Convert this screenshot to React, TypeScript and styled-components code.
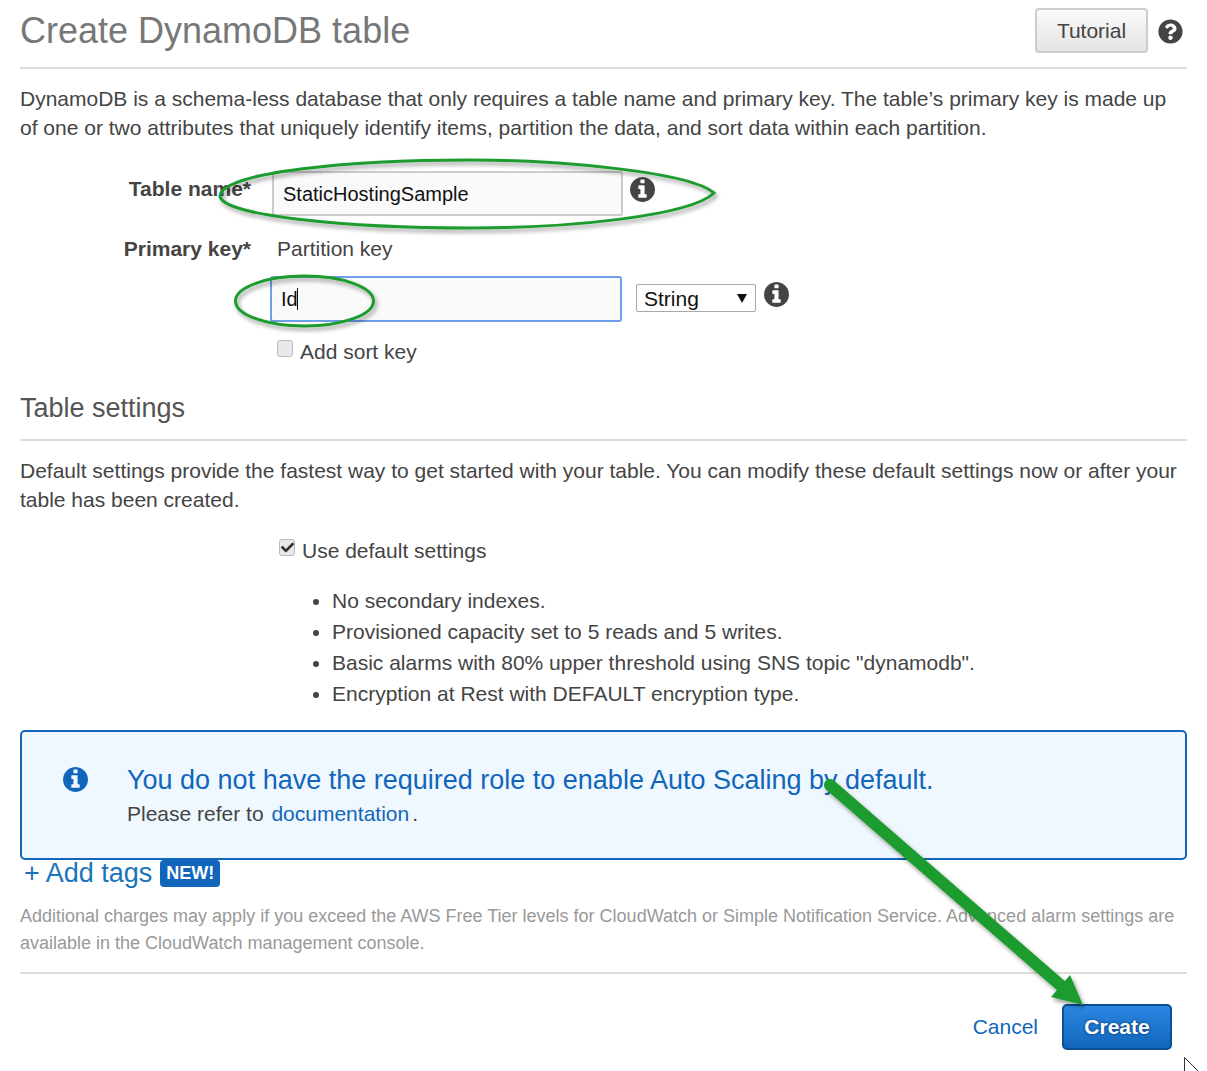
import styled, { createGlobalStyle } from "styled-components"
import { FaCheck, FaQuestionCircle } from "react-icons/fa"

const GlobalStyle = createGlobalStyle`
  html, body {
    margin: 0;
    padding: 0;
    background: #fff;
  }
  * {
    box-sizing: border-box;
  }
`

// the solid circle with the heavy serif "i" used by the console
function InfoGlyph({ className }: { className?: string }) {
  return (
    <svg className={className} viewBox="0 0 1536 1536" fill="currentColor">
      <path d="M1024 1248v-160q0-14-9-23t-23-9h-96v-512q0-14-9-23t-23-9h-320q-14 0-23 9t-9 23v160q0 14 9 23t23 9h96v320h-96q-14 0-23 9t-9 23v160q0 14 9 23t23 9h448q14 0 23-9t9-23zm-128-896v-160q0-14-9-23t-23-9h-192q-14 0-23 9t-9 23v160q0 14 9 23t23 9h192q14 0 23-9t9-23zm640 416q0 209-103 385.5t-279.5 279.5-385.5 103-385.5-103-279.5-279.5-103-385.5 103-385.5 279.5-279.5 385.5-103 385.5 103 279.5 279.5 103 385.5z" />
    </svg>
  )
}

const Page = styled.div`
  position: relative;
  width: 1207px;
  height: 1071px;
  overflow: hidden;
  padding: 0 20px;
  font-family: "Liberation Sans", Arial, sans-serif;
  font-size: 21px;
  line-height: 29px;
  color: #444;
`

const Header = styled.header`
  display: flex;
  align-items: center;
  height: 69px;
  padding: 0 4px 7px 0;
  border-bottom: 2px solid #ddd;
`

const Title = styled.h1`
  flex: 1;
  margin: 2px 0 0;
  font-size: 36px;
  line-height: 44px;
  font-weight: 400;
  color: #777;
`

const TutorialButton = styled.button`
  width: 113px;
  height: 45px;
  margin-right: 10px;
  border: 2px solid #ccc;
  border-radius: 4px;
  background: linear-gradient(#fafafa, #e4e4e4);
  font: inherit;
  color: #444;
`

const HelpIcon = styled(FaQuestionCircle)`
  width: 25px;
  height: 25px;
  margin-top: 2px;
  color: #444;
`

const Paragraph = styled.p`
  margin: 15px 0 0;
`

const Form = styled.div`
  display: grid;
  grid-template-columns: 231px 1fr;
  margin-top: 28px;
`

const Label = styled.div<{ $top: number }>`
  padding-top: ${(p) => p.$top}px;
  font-weight: 700;
  text-align: right;
`

const Field = styled.div`
  display: flex;
  align-items: flex-start;
`

const NameInput = styled.input`
  width: 351px;
  height: 45px;
  margin: 1px 0 0 21px;
  padding: 2px 9px 0;
  border: 2px solid #ccc;
  border-radius: 3px;
  background: #fafafa;
  font-family: inherit;
  font-size: 20px;
  color: #111;
  outline: none;
`

const InfoIcon = styled(InfoGlyph)<{ $left: number; $top: number }>`
  width: 25px;
  height: 25px;
  margin-left: ${(p) => p.$left}px;
  margin-top: ${(p) => p.$top}px;
  flex-shrink: 0;
  color: #444;
`

const StaticText = styled.div`
  margin: 18px 0 0 26px;
`

const KeyField = styled(Field)`
  grid-column: 2;
  margin: 13px 0 0 19px;
`

const KeyInputWrap = styled.div`
  position: relative;
`

const KeyInput = styled(NameInput)`
  width: 352px;
  height: 46px;
  margin: 0;
  padding: 0 9px;
  border-color: #6f9eea;
`

const Caret = styled.span`
  position: absolute;
  left: 27px;
  top: 12px;
  width: 1px;
  height: 22px;
  background: #111;
`

const SelectBox = styled.div`
  display: flex;
  justify-content: space-between;
  align-items: center;
  width: 120px;
  height: 28px;
  margin: 8px 0 0 14px;
  padding: 0 8px 0 7px;
  border: 1px solid #a9a9a9;
  border-radius: 2px;
  color: #111;
`

const SelectArrow = styled.span`
  width: 0;
  height: 0;
  border-left: 5px solid transparent;
  border-right: 5px solid transparent;
  border-top: 9px solid #111;
`

const CheckRow = styled.label<{ $left: number; $top: number }>`
  display: flex;
  align-items: center;
  gap: 7px;
  margin: ${(p) => p.$top}px 0 0 ${(p) => p.$left}px;
`

const CheckBox = styled.span`
  display: flex;
  align-items: center;
  justify-content: center;
  width: 16px;
  height: 17px;
  margin-top: -6px;
  border: 1px solid #bbb;
  border-radius: 3px;
  background: #e8e8e8;
  color: #333;
  font-size: 13px;
`

const SortRow = styled(CheckRow)`
  grid-column: 2;
`

const SectionTitle = styled.h2`
  margin: 25px 0 0;
  padding-bottom: 14px;
  border-bottom: 2px solid #ddd;
  font-size: 27px;
  line-height: 34px;
  font-weight: 400;
  color: #555;
`

const Bullets = styled.ul`
  margin: 20px 0 0;
  padding: 0 0 0 312px;
  line-height: 31px;
`

const Alert = styled.div`
  display: flex;
  height: 130px;
  margin-top: 21px;
  padding: 32px 0 0 41px;
  border: 2px solid #1166bb;
  border-radius: 5px;
  background: #f0f8ff;
`

const AlertIcon = styled(InfoGlyph)`
  width: 25px;
  height: 25px;
  margin-top: 3px;
  color: #1166bb;
`

const AlertBody = styled.div`
  margin-left: 39px;
`

const AlertTitle = styled.div`
  font-size: 27px;
  line-height: 32px;
  color: #1166bb;
`

const AlertText = styled.div`
  margin-top: 3px;
`

const DocLink = styled.a`
  margin-left: 2px;
  margin-right: 3px;
  color: #1166bb;
`

const TagsRow = styled.div`
  display: flex;
  align-items: center;
  gap: 8px;
  height: 28px;
  margin-top: -1px;
  padding-left: 4px;
`

const TagsLink = styled.a`
  font-size: 27px;
  line-height: 28px;
  color: #1b75bb;
`

const NewBadge = styled.span`
  padding: 0 6px;
  border-radius: 4px;
  background: #1166bb;
  color: #fff;
  font-size: 18px;
  line-height: 27px;
  font-weight: 700;
`

const Note = styled.p`
  margin: 16px 0 0;
  padding-bottom: 15px;
  border-bottom: 2px solid #ddd;
  font-size: 18px;
  line-height: 27px;
  color: #999;
`

const Footer = styled.footer`
  display: flex;
  justify-content: flex-end;
  align-items: center;
  gap: 24px;
  margin-top: 30px;
  padding-right: 15px;
`

const CancelLink = styled.a`
  margin-bottom: 2px;
  color: #1166bb;
`

const CreateButton = styled.button`
  width: 110px;
  height: 46px;
  padding-bottom: 3px;
  border: 2px solid #0b4f94;
  border-radius: 5px;
  background: linear-gradient(#2b87e3, #1166bb);
  font: inherit;
  font-weight: 700;
  color: #fff;
  text-shadow: 0 0 3px #06325f;
`

const Annotations = styled.svg`
  position: absolute;
  left: 0;
  top: 0;
  pointer-events: none;
`

export default function App() {
  return (
    <Page>
      <GlobalStyle />
      <Header>
        <Title>Create DynamoDB table</Title>
        <TutorialButton>Tutorial</TutorialButton>
        <HelpIcon />
      </Header>

      <Paragraph>
        DynamoDB is a schema-less database that only requires a table name and primary key. The table’s primary key is
        made up of one or two attributes that uniquely identify items, partition the data, and sort data within each
        partition.
      </Paragraph>

      <Form>
        <Label $top={4}>Table name*</Label>
        <Field>
          <NameInput readOnly value="StaticHostingSample" />
          <InfoIcon $left={7} $top={7} />
        </Field>
        <Label $top={18}>Primary key*</Label>
        <StaticText>Partition key</StaticText>
        <KeyField>
          <KeyInputWrap>
            <KeyInput readOnly value="Id" />
            <Caret />
          </KeyInputWrap>
          <SelectBox>
            String
            <SelectArrow />
          </SelectBox>
          <InfoIcon $left={8} $top={6} />
        </KeyField>
        <SortRow $left={26} $top={15}>
          <CheckBox />
          Add sort key
        </SortRow>
      </Form>

      <SectionTitle>Table settings</SectionTitle>

      <Paragraph>
        Default settings provide the fastest way to get started with your table. You can modify these default settings
        now or after your table has been created.
      </Paragraph>

      <CheckRow $left={259} $top={22}>
        <CheckBox>
          <FaCheck />
        </CheckBox>
        Use default settings
      </CheckRow>

      <Bullets>
        <li>No secondary indexes.</li>
        <li>Provisioned capacity set to 5 reads and 5 writes.</li>
        <li>Basic alarms with 80% upper threshold using SNS topic "dynamodb".</li>
        <li>Encryption at Rest with DEFAULT encryption type.</li>
      </Bullets>

      <Alert>
        <AlertIcon />
        <AlertBody>
          <AlertTitle>You do not have the required role to enable Auto Scaling by default.</AlertTitle>
          <AlertText>
            Please refer to <DocLink>documentation</DocLink>.
          </AlertText>
        </AlertBody>
      </Alert>

      <TagsRow>
        <TagsLink>+ Add tags</TagsLink>
        <NewBadge>NEW!</NewBadge>
      </TagsRow>

      <Note>
        Additional charges may apply if you exceed the AWS Free Tier levels for CloudWatch or Simple Notification
        Service. Advanced alarm settings are available in the CloudWatch management console.
      </Note>

      <Footer>
        <CancelLink>Cancel</CancelLink>
        <CreateButton>Create</CreateButton>
      </Footer>

      <Annotations width="1207" height="1071" viewBox="0 0 1207 1071" fill="none">
        <defs>
          <filter id="shadow" x="-10%" y="-10%" width="120%" height="120%">
            <feDropShadow dx="2" dy="3" stdDeviation="2" floodColor="#000" floodOpacity="0.4" />
          </filter>
        </defs>
        <g filter="url(#shadow)">
          <path
            d="M714 193 C690 172 560 160 470 160 C350 160 222 172 220 196 C222 216 350 228 470 228 C570 228 690 216 714 193 Z"
            stroke="#1f9c2f"
            strokeWidth="3"
          />
          <ellipse cx="304.5" cy="301" rx="69" ry="25" stroke="#1f9c2f" strokeWidth="3" />
          <line x1="830" y1="785" x2="1066" y2="990" stroke="#1f9c2f" strokeWidth="12" strokeLinecap="round" />
          <polygon points="1051,997 1070,975 1083,1005" fill="#1f9c2f" />
        </g>
        <path d="M1184.5 1057.5 V1071 M1184.5 1057.5 L1198 1071" stroke="#333" strokeWidth="1" />
      </Annotations>
    </Page>
  )
}
